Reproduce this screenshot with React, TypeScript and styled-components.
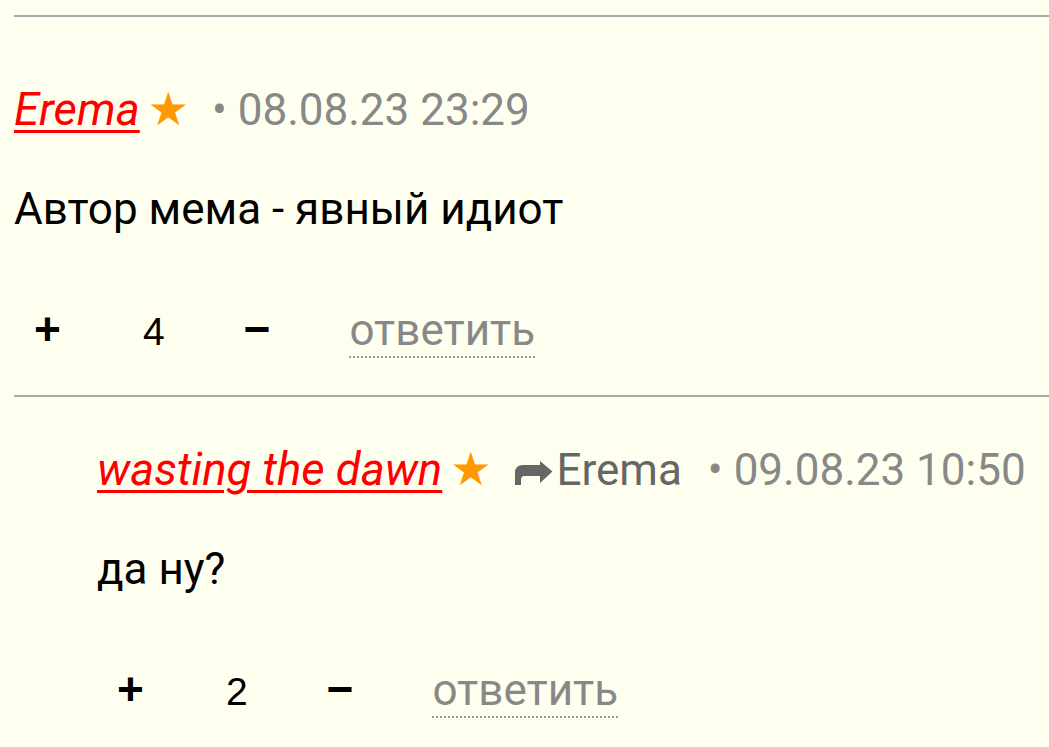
import React from "react";
import styled, { createGlobalStyle } from "styled-components";

const Global = createGlobalStyle`
  html, body {
    margin: 0;
    padding: 0;
    background: #fffff0;
  }
  body {
    font-family: Roboto, "Noto Sans", Arial, sans-serif;
    color: #000;
  }
`;

const Thread = styled.div`
  margin-left: 14px;
  border-top: 2px solid #aaaaaa;
  margin-top: 15px;
  padding-top: 16px;
`;

const CommentBox = styled.div<{ $divided?: boolean; $indent?: number }>`
  border-top: ${(p) => (p.$divided ? "2px solid #aaaaaa" : "none")};
  padding-top: ${(p) => (p.$divided ? 42 : 46)}px;
  padding-bottom: 33px;
  padding-left: ${(p) => p.$indent ?? 0}px;
`;

const Header = styled.div`
  display: flex;
  align-items: baseline;
  font-size: 44px;
  line-height: 60px;
  white-space: nowrap;
`;

const Author = styled.a`
  color: #ff0000;
  font-style: italic;
  font-size: 45.5px;
  text-decoration: underline;
  text-decoration-thickness: 3px;
  text-underline-offset: 5px;
  cursor: pointer;
`;

const Star = styled.span`
  color: #ff9900;
  font-family: "DejaVu Sans", sans-serif;
  font-size: 46px;
  margin-left: 8px;
`;

const ReplyTo = styled.span`
  display: inline-flex;
  align-items: baseline;
  color: #666666;
  margin-left: 24px;
  svg {
    margin-right: 3px;
  }
`;

const Meta = styled.span`
  color: #888888;
  margin-left: 26px;
  ${Star} + & {
    margin-left: 23px;
  }
`;

const Body = styled.div`
  font-size: 44px;
  line-height: 60px;
  margin-top: 39px;
`;

const Actions = styled.div`
  display: flex;
  align-items: baseline;
  gap: 79px;
  margin-top: 60px;
  margin-left: 20px;
  line-height: 60px;
`;

const Vote = styled.span`
  font-family: "Liberation Sans", Arial, sans-serif;
  font-size: 39px;
  padding-left: 3px;
  color: #000;
`;

const VoteButton = styled.span`
  font-family: "Liberation Sans", Arial, sans-serif;
  font-size: 46px;
  font-weight: bold;
  color: #000;
  cursor: pointer;
`;

const ReplyLink = styled.a`
  font-size: 44px;
  color: #888888;
  text-decoration: underline dotted;
  text-decoration-color: #999999;
  text-decoration-thickness: 2px;
  text-underline-offset: 11px;
  cursor: pointer;
`;

const ShareIcon = () => (
  <svg width="38" height="24" viewBox="0 0 38 24" aria-hidden="true">
    <path
      d="M25 0 L37.5 10.5 L25 22 L25 15 L9.5 15 Q6 15 6 18.5 L6 24 L0 24 L0 12 Q0 4 8 4 L25 4 Z"
      fill="#666666"
    />
  </svg>
);

type CommentProps = {
  author: string;
  replyTo?: string;
  date: string;
  text: string;
  score: number;
  indent?: number;
  divided?: boolean;
};

const Comment: React.FC<CommentProps> = ({ author, replyTo, date, text, score, indent, divided }) => (
  <CommentBox $indent={indent} $divided={divided}>
    <Header>
      <Author>{author}</Author>
      <Star>★</Star>
      {replyTo && (
        <ReplyTo>
          <ShareIcon />
          {replyTo}
        </ReplyTo>
      )}
      <Meta>• {date}</Meta>
    </Header>
    <Body>{text}</Body>
    <Actions>
      <VoteButton>+</VoteButton>
      <Vote>{score}</Vote>
      <VoteButton>−</VoteButton>
      <ReplyLink>ответить</ReplyLink>
    </Actions>
  </CommentBox>
);

export default function App() {
  return (
    <>
      <Global />
      <Thread>
        <Comment author="Erema" date="08.08.23 23:29" text="Автор мема - явный идиот" score={4} />
        <Comment
          divided
          indent={83}
          author="wasting the dawn"
          replyTo="Erema"
          date="09.08.23 10:50"
          text="да ну?"
          score={2}
        />
      </Thread>
    </>
  );
}
